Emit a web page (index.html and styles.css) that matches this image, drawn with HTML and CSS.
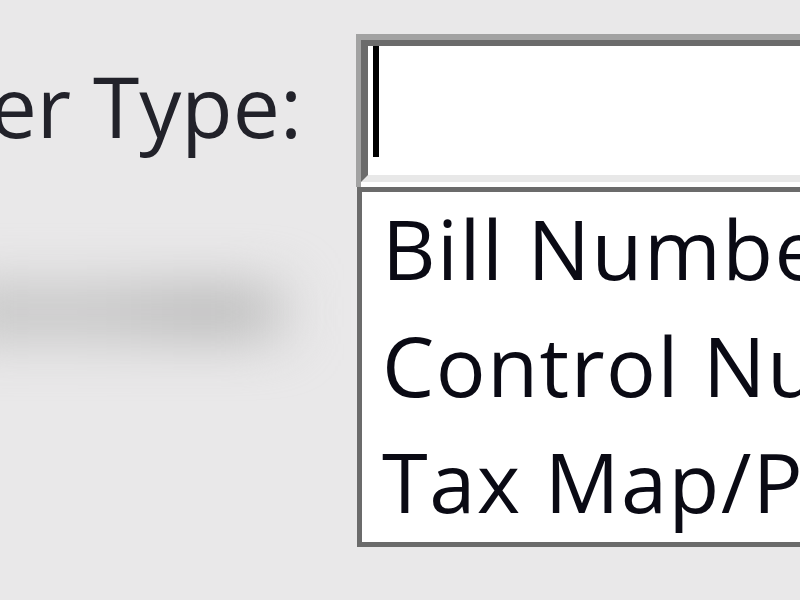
FILE: index.html
```html
<!DOCTYPE html>
<html>
<head>
<meta charset="utf-8">
<link rel="stylesheet" href="styles.css">
</head>
<body>
<div class="page">
  <div class="blur-shape"></div>
  <div class="label-col"><span class="label">Number Type:</span></div>
  <div class="combo">
    <div class="input-outer">
      <div class="input-inner"><span class="caret"></span></div>
      <div class="input-gap"></div>
    </div>
    <ul class="dropdown">
      <li class="item">Bill Number</li>
      <li class="item">Control Number</li>
      <li class="item">Tax Map/Parcel</li>
    </ul>
  </div>
</div>
</body>
</html>
```

FILE: styles.css
```css
html, body {
  margin: 0;
  padding: 0;
  background: #e9e8e9;
  overflow: hidden;
  width: 800px;
  height: 600px;
}
.page {
  position: relative;
  display: flex;
  align-items: flex-start;
  padding-top: 34px;
  width: 800px;
  height: 566px;
  overflow: hidden;
  font-family: "Open Sans", "Noto Sans", sans-serif;
}
.blur-shape {
  position: absolute;
  left: -40px;
  top: 280px;
  width: 345px;
  height: 64px;
  background: linear-gradient(to right, #cacaca 0%, #cbcbcb 40%, #c1c1c1 68%, #c4c4c4 86%, rgba(210,210,210,0) 100%);
  filter: blur(24px);
}
.label-col {
  flex: 0 0 302px;
  width: 302px;
  overflow: hidden;
  display: flex;
  justify-content: flex-end;
  margin-top: 14px;
  margin-right: 54px;
}
.label {
  white-space: nowrap;
  font-size: 84px;
  line-height: 116px;
  color: #22222a;
}
.combo {
  flex: 0 0 620px;
  width: 620px;
  display: flex;
  flex-direction: column;
}
.input-outer {
  border-top: 6px solid #a2a2a2;
  border-left: 5px solid #a2a2a2;
  background: #ffffff;
}
.input-inner {
  height: 129px;
  border-top: 6px solid #6b6b6b;
  border-left: 7px solid #6b6b6b;
  border-bottom: 7px solid #e8e8e8;
  background: #ffffff;
  padding-left: 5px;
}
.caret {
  display: block;
  width: 6px;
  height: 111px;
  background: #000000;
}
.input-gap {
  height: 5px;
  background: #ffffff;
}
.dropdown {
  list-style: none;
  margin: 0 0 0 1px;
  padding: 0 0 0 20px;
  border: 5px solid #6b6b6b;
  background: #ffffff;
  height: 350px;
  overflow: hidden;
}
.item {
  font-size: 83px;
  line-height: 116.5px;
  letter-spacing: 1.5px;
  color: #0a0a14;
  white-space: nowrap;
}
.item:first-child {
  margin-top: -2px;
}
```
